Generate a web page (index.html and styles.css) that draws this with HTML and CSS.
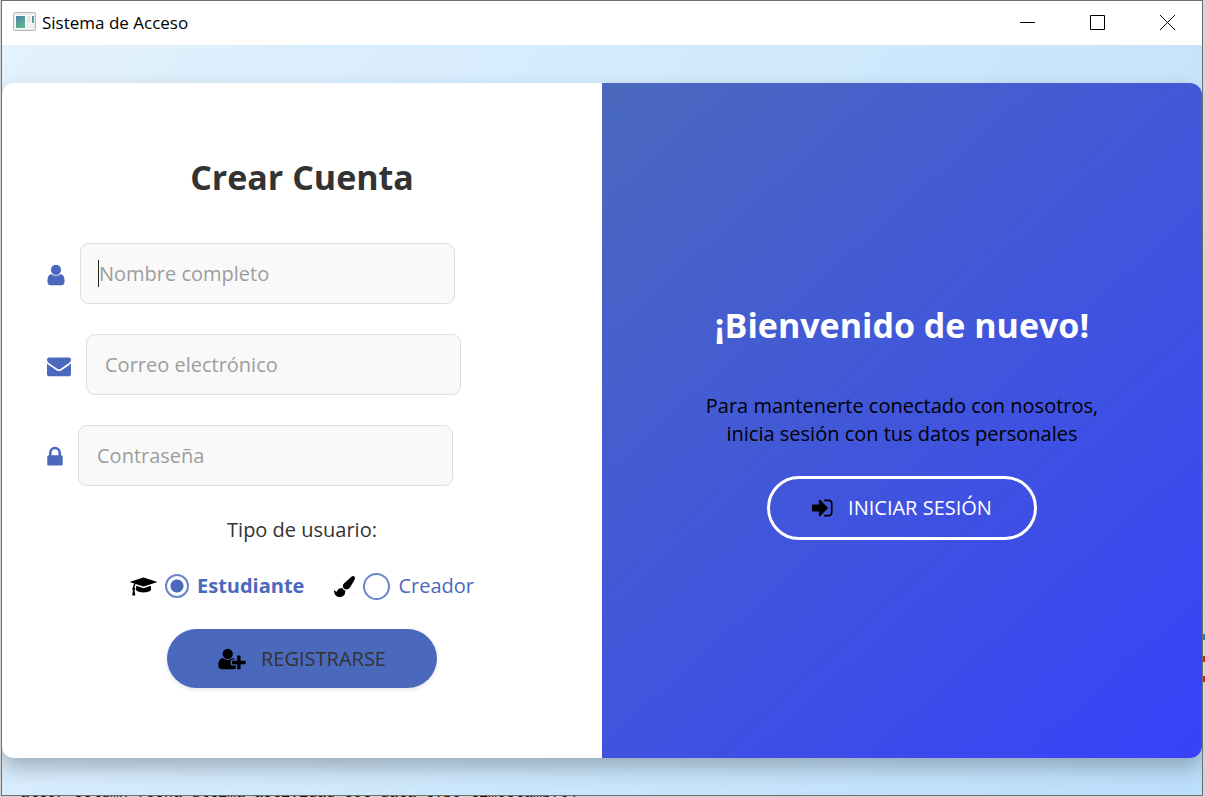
FILE: index.html
```html
<!DOCTYPE html>
<html lang="es">
<head>
<meta charset="utf-8">
<title>Sistema de Acceso</title>
<link rel="stylesheet" href="styles.css">
</head>
<body>
<div class="desktop">
  <div class="editor-line" aria-hidden="true">alter column fecha_ultima_actividad set data type timestamp(6)</div>
  <div class="editor-mark mark-blue" aria-hidden="true"></div>
  <div class="editor-mark mark-red" aria-hidden="true"></div>
  <div class="editor-mark mark-red-low" aria-hidden="true"></div>
  <div class="window">
    <header class="titlebar">
      <svg class="app-icon" viewBox="0 0 23 19" width="23" height="19" aria-hidden="true">
        <defs><linearGradient id="pane" x1="0" y1="0" x2="0.6" y2="1"><stop offset="0" stop-color="#4a7fae"/><stop offset="1" stop-color="#62b587"/></linearGradient></defs>
        <rect x="0.5" y="0.5" width="22" height="18" rx="1" fill="#e9ebed" stroke="#b4b9be"/>
        <rect x="2" y="3" width="19" height="14" fill="#fafafa"/>
        <rect x="3" y="4" width="9" height="12" fill="url(#pane)"/>
        <rect x="14" y="4" width="4" height="7" fill="#e6e6e6"/>
        <rect x="14" y="12" width="7" height="4" fill="#eeeeee"/>
        <rect x="19" y="4" width="2" height="7" fill="url(#pane)"/>
      </svg>
      <span class="window-title">Sistema de Acceso</span>
      <div class="window-controls">
        <button class="window-button" type="button" aria-label="Minimizar"><svg viewBox="0 0 15 15" width="15" height="15"><path d="M0 7.5h15"/></svg></button>
        <button class="window-button" type="button" aria-label="Maximizar"><svg viewBox="0 0 15 15" width="15" height="15"><path d="M.5.5h14v14H.5z"/></svg></button>
        <button class="window-button" type="button" aria-label="Cerrar"><svg viewBox="0 0 15 15" width="15" height="15"><path d="M0 0l15 15M15 0L0 15"/></svg></button>
      </div>
    </header>
    <main class="scene">
      <div class="card">
        <form class="signup">
          <h1 class="heading">Crear Cuenta</h1>
          <div class="fields">
            <div class="field">
              <label for="name" aria-label="Nombre completo"><svg class="icon" viewBox="224 0 1344 1792" width="18" height="24"><path d="M1536 1399q0 109-62.5 187t-150.5 78h-854q-88 0-150.5-78t-62.5-187q0-85 8.5-160.5t31.5-152 58.5-131 94-89 134.5-34.5q131 128 313 128t313-128q76 0 134.5 34.5t94 89 58.5 131 31.5 152 8.5 160.5zm-256-887q0 159-112.5 271.5t-271.5 112.5-271.5-112.5-112.5-271.5 112.5-271.5 271.5-112.5 271.5 112.5 112.5 271.5z"/></svg></label>
              <div class="input-wrap">
                <input class="input" id="name" type="text" placeholder="Nombre completo">
                <span class="caret" aria-hidden="true"></span>
              </div>
            </div>
            <div class="field">
              <label for="email" aria-label="Correo electrónico"><svg class="icon" viewBox="0 0 1792 1792" width="24" height="24"><path d="M1792 710v794q0 66-47 113t-113 47h-1472q-66 0-113-47t-47-113v-794q44 49 101 87 362 246 497 345 57 42 92.500 65.500t94.500 48 110 24.500h2q51 0 110-24.500t94.500-48 92.500-65.500q170-123 498-345 57-39 100-87zm0-294q0 79-49 151t-122 123q-376 261-468 325-10 7-42.500 31t-54 38.500-52 32.500-57.500 27-50 9h-2q-23 0-50-9t-57.500-27-52-32.500-54-38.500-42.500-31q-91-64-262-182.500t-205-142.500q-62-42-117-115.500t-55-136.500q0-78 41.500-130t118.500-52h1472q65 0 112.500 47t47.500 113z"/></svg></label>
              <div class="input-wrap"><input class="input" id="email" type="email" placeholder="Correo electrónico"></div>
            </div>
            <div class="field">
              <label for="password" aria-label="Contraseña"><svg class="icon" viewBox="299 0 1195 1792" width="16" height="24"><path d="M640 768h512v-192q0-106-75-181t-181-75-181 75-75 181v192zm832 96v576q0 40-28 68t-68 28h-960q-40 0-68-28t-28-68v-576q0-40 28-68t68-28h32v-192q0-184 132-316t316-132 316 132 132 316v192h32q40 0 68 28t28 68z"/></svg></label>
              <div class="input-wrap"><input class="input" id="password" type="password" placeholder="Contraseña"></div>
            </div>
          </div>
          <p class="type-label" id="type-label">Tipo de usuario:</p>
          <div class="types" role="radiogroup" aria-labelledby="type-label">
            <label class="type">
              <svg class="icon-dark" viewBox="0 0 2304 1792" width="27" height="21" aria-hidden="true"><path d="M1774 836l18 316q4 69-82 128t-235 93.500-323 34.500-323-34.500-235-93.500-82-128l18-316 574 181q22 7 48 7t48-7zm530-324q0 23-22 31l-1120 352q-4 1-10 1t-10-1l-652-206q-43 34-71 111.500t-34 178.500q63 36 63 109 0 69-58 107l58 433q2 14-8 25-9 11-24 11h-192q-15 0-24-11-10-11-8-25l58-433q-58-38-58-107 0-73 65-111 11-207 98-330l-333-104q-22-8-22-31t22-31l1120-352q4-1 10-1t10 1l1120 352q22 8 22 31z"/></svg>
              <input class="radio" type="radio" name="type" checked>
              <span class="type-name">Estudiante</span>
            </label>
            <label class="type">
              <svg class="icon-dark" viewBox="0 0 1792 1792" width="21" height="21" aria-hidden="true"><path d="M1615 0q70 0 122.500 46.500t52.500 116.500q0 63-45 151-332 629-465 752-97 91-218 91-126 0-216.500-92.500t-90.500-219.500q0-128 92-212l638-579q59-54 130-54zm-909 1034q39 76 106.500 130t150.500 76l1 71q4 213-129.500 347t-348.500 134q-123 0-218-46.500t-152.500-127.500-86.500-183-29-220q7 5 41 30t62 44.500 59 36.500 46 17q41 0 55-37 25-66 57.500-112.500t69.500-76 88-47.500 103-25.500 125-10.500z"/></svg>
              <input class="radio" type="radio" name="type">
              <span class="type-name">Creador</span>
            </label>
          </div>
          <button class="pill pill-solid" type="submit">
            <svg class="icon-dark" viewBox="0 0 2048 1792" width="28" height="24" aria-hidden="true"><path d="M704 896q-159 0-271.500-112.500t-112.500-271.500 112.500-271.500 271.500-112.500 271.500 112.500 112.500 271.500-112.500 271.500-271.500 112.500zm960 128h352q13 0 22.500 9.500t9.500 22.500v192q0 13-9.500 22.500t-22.500 9.500h-352v352q0 13-9.500 22.500t-22.500 9.500h-192q-13 0-22.500-9.500t-9.500-22.500v-352h-352q-13 0-22.500-9.500t-9.500-22.500v-192q0-13 9.500-22.500t22.500-9.500h352v-352q0-13 9.500-22.500t22.500-9.500h192q13 0 22.500 9.500t9.500 22.500v352zm-736 224q0 52 38 90t90 38h256v238q-68 50-171 50h-874q-121 0-194-69t-73-190q0-53 3.500-103.500t14-109 26.500-108.500 43-97.500 62-81 85.500-53.500 111.500-20q19 0 39 17 79 61 154.500 91.500t164.500 30.500 164.500-30.500 154.500-91.500q20-17 39-17 132 0 217 96h-223q-52 0-90 38t-38 90v192z"/></svg>
            <span>REGISTRARSE</span>
          </button>
        </form>
        <section class="welcome">
          <h2 class="heading">¡Bienvenido de nuevo!</h2>
          <p class="welcome-text">Para mantenerte conectado con nosotros,<br>inicia sesión con tus datos personales</p>
          <button class="pill pill-outline" type="button">
            <svg class="icon-dark" viewBox="128 0 1568 1792" width="21" height="24" aria-hidden="true"><path d="M1312 896q0 26-19 45l-544 544q-19 19-45 19t-45-19-19-45v-288h-448q-26 0-45-19t-19-45v-384q0-26 19-45t45-19h448v-288q0-26 19-45t45-19 45 19l544 544q19 19 19 45zm352-352v704q0 119-84.500 203.500t-203.500 84.500h-320q-13 0-22.500-9.500t-9.500-22.500q0-4-1-20t-.5-26.500 3-23.500 10-19.500 20.500-6.500h320q66 0 113-47t47-113v-704q0-66-47-113t-113-47h-312l-11.500-1-11.500-3-8-5.500-7-9-2-13.500q0-4-1-20t-.5-26.500 3-23.500 10-19.500 20.500-6.500h320q119 0 203.500 84.500t84.500 203.500z"/></svg>
            <span>INICIAR SESIÓN</span>
          </button>
        </section>
      </div>
    </main>
  </div>
</div>
</body>
</html>
```
FILE: styles.css
```css
* { box-sizing: border-box; }

body {
  margin: 0;
  font-family: "Segoe UI", "Open Sans", "Noto Sans", sans-serif;
  font-size: 20px;
  line-height: 28px;
  color: #333;
}

.desktop {
  position: relative;
  display: flex;
  min-height: 100vh;
  padding: 0 2px 1px 1px;
  overflow: hidden;
  background: #d4d4d4;
}

/* Editor content showing around the window's edges */
.editor-line {
  position: absolute;
  left: 20px;
  bottom: -5px;
  font: 15px/16px "Liberation Mono", monospace;
  white-space: nowrap;
  color: #111;
}
.editor-mark { position: absolute; right: 0; width: 2px; height: 6px; }
.mark-blue { top: 634px; background: #2a78a8; }
.mark-red { top: 656px; background: #d02010; }
.mark-red-low { top: 676px; background: #d02010; }

.window {
  position: relative;
  display: flex;
  flex: 1;
  flex-direction: column;
  border: 1px solid #6e6e6e;
  background: #fff;
}

.titlebar {
  display: flex;
  align-items: center;
  height: 44px;
  padding-left: 11px;
  gap: 6px;
  color: #000;
}
.app-icon { margin-bottom: 3px; }
.window-title { font-size: 17px; }
.window-controls { display: flex; align-self: stretch; margin-left: auto; }
.window-button {
  display: flex;
  align-items: center;
  justify-content: center;
  width: 70px;
  padding: 0 0 2px;
  border: 0;
  background: none;
}
.window-button svg { fill: none; stroke: #000; stroke-width: 1; }

.scene {
  display: flex;
  flex: 1;
  padding: 38px 0 37px;
  overflow: hidden;
  background: linear-gradient(122deg, #e3f2fd, #bbdefb);
}

.card {
  display: grid;
  flex: 1;
  grid-template-columns: 1fr 1fr;
  border-radius: 12px;
  background: #fff;
  box-shadow: 0 10px 20px rgba(0, 0, 0, 0.25);
}

.signup, .welcome {
  display: flex;
  flex-direction: column;
  align-items: center;
  justify-content: center;
}
.signup { padding: 0 45px; }
.welcome {
  padding: 0 45px;
  border-radius: 0 12px 12px 0;
  background: linear-gradient(138deg, #4a69bd, #3742fa);
}

.heading {
  margin: 0;
  font-size: 34px;
  line-height: 48px;
  font-weight: 700;
}
.signup .heading { margin-bottom: 42px; }
.welcome .heading { margin-bottom: 43px; color: #fff; }

.fields {
  display: flex;
  flex-direction: column;
  align-self: stretch;
  gap: 30px;
}
.field { display: flex; align-items: center; gap: 15px; }
.field label { display: flex; padding-top: 2px; }
.icon { fill: #4a69bd; }
.icon-dark { flex: none; fill: #000; }

.input-wrap { position: relative; flex: 0 1 375px; }
.input {
  display: block;
  width: 100%;
  height: 61px;
  padding: 0 18px;
  border: 1px solid #dedede;
  border-radius: 9px;
  background: #f9f9f9;
  font: inherit;
  color: #333;
}
.input::placeholder { color: #9d9d9d; opacity: 1; }
.caret {
  position: absolute;
  top: 17px;
  left: 18px;
  width: 1px;
  height: 27px;
  background: #222;
}

.type-label { margin: 30px 0 28px; }
.types { display: flex; gap: 30px; color: #4a69bd; }
.type { display: flex; align-items: center; gap: 8px; }

.radio {
  flex: none;
  width: 27px;
  height: 27px;
  margin: 0;
  border: 2px solid #6b85c9;
  border-radius: 50%;
  appearance: none;
  background: #fff;
}
.radio:checked {
  width: 24px;
  height: 24px;
  background: radial-gradient(circle, #4a69bd 6px, #fff 7px);
}
.radio:checked + .type-name { font-weight: 700; }

.pill {
  display: flex;
  align-items: center;
  justify-content: center;
  gap: 15px;
  width: 270px;
  height: 59px;
  padding: 0;
  border: 0;
  border-radius: 32px;
  font: inherit;
}
.pill-solid {
  margin-top: 29px;
  background: #4a69bd;
  color: #333;
  box-shadow: 0 2px 5px rgba(0, 0, 0, 0.1);
}
.pill-outline {
  height: 64px;
  border: 3px solid #fff;
  background: transparent;
  color: #fff;
}

.welcome-text { margin: 0 0 28px; text-align: center; color: #000; }
```
